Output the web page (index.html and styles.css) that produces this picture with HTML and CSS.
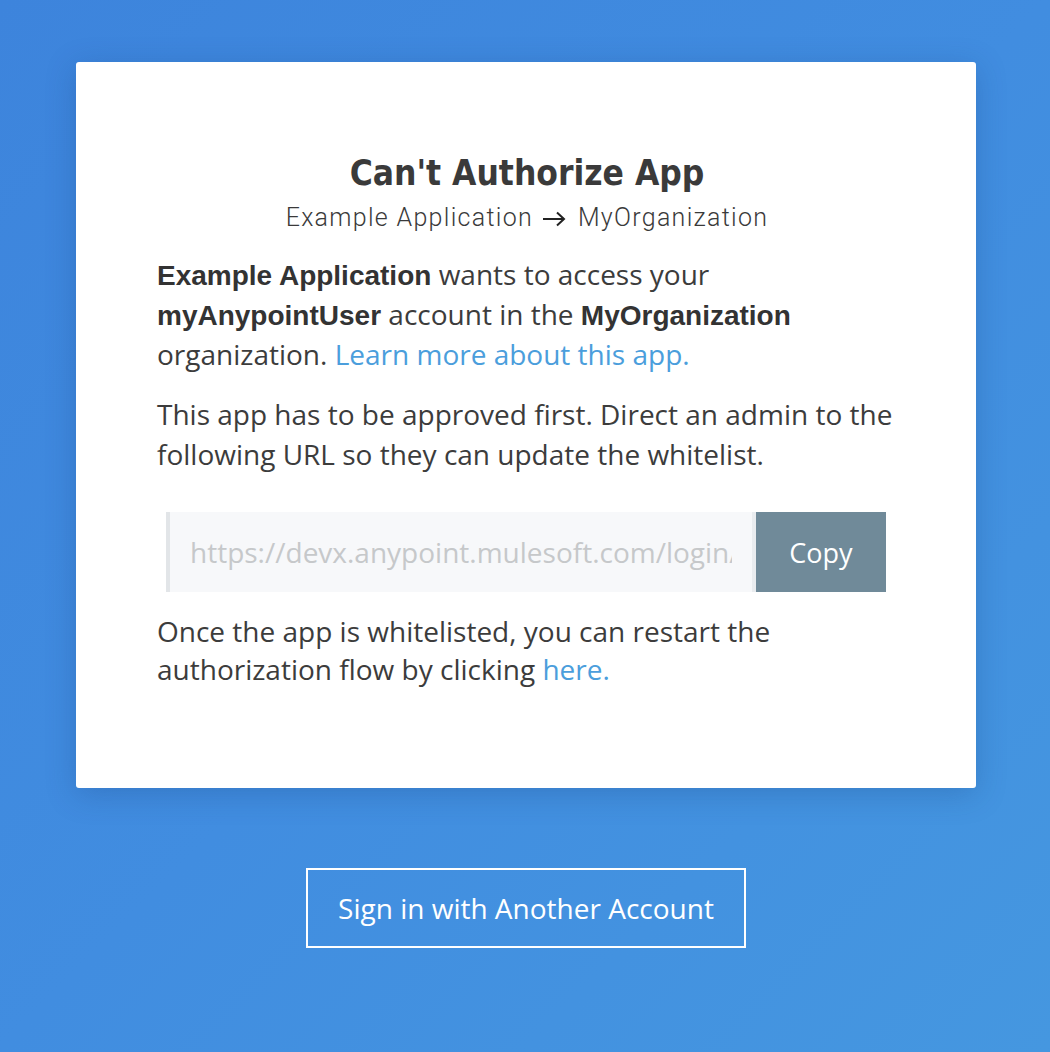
FILE: index.html
```html
<!DOCTYPE html>
<html>
<head>
<meta charset="utf-8">
<link rel="stylesheet" href="styles.css">
</head>
<body>
<main class="page">
  <section class="card">
    <h1 class="title">Can't Authorize App</h1>
    <p class="subtitle">Example Application <svg class="arrow" width="24" height="16" viewBox="0 0 24 16"><path d="M1 8H22M15 1.5L22 8L15 14.5" fill="none" stroke="#222" stroke-width="2"/></svg> MyOrganization</p>
    <p class="text first"><b>Example Application</b> wants to access your <b>myAnypointUser</b> account in the <b>MyOrganization</b> organization. <a class="link" href="#">Learn more about this app.</a></p>
    <p class="text">This app has to be approved first. Direct an admin to the following URL so they can update the whitelist.</p>
    <div class="copybox">
      <div class="url"><span class="url-text">https://devx.anypoint.mulesoft.com/login/authorize?client_id=example</span></div>
      <button class="copy">Copy</button>
    </div>
    <p class="text last">Once the app is whitelisted, you can restart the authorization flow by clicking <a class="link" href="#">here.</a></p>
  </section>
  <button class="signin">Sign in with Another Account</button>
</main>
</body>
</html>
```
FILE: styles.css
```css
html, body {
  margin: 0;
  padding: 0;
}
body {
  background: linear-gradient(135deg, #3d84dc 0%, #418de0 50%, #4597e0 100%);
  min-height: 1052px;
  font-family: "Open Sans", sans-serif;
}
.page {
  display: flex;
  flex-direction: column;
  align-items: center;
  padding-top: 62px;
  padding-left: 2px;
}
.card {
  width: 900px;
  box-sizing: border-box;
  height: 726px;
  background: #fff;
  border-radius: 3px;
  box-shadow: 0 6px 30px rgba(20, 60, 120, 0.25);
  padding: 88px 79px 0 81px;
}
.title {
  margin: 0;
  text-align: center;
  font-family: "DejaVu Sans Condensed", "Roboto", sans-serif;
  font-weight: bold;
  font-size: 35px;
  line-height: 46px;
  color: #3a3a3a;
}
.subtitle {
  margin: 0;
  text-align: center;
  font-family: "Roboto", sans-serif;
  font-weight: 300;
  font-size: 25px;
  line-height: 44px;
  letter-spacing: 1.3px;
  color: #3a3a3a;
}
.arrow {
  display: inline-block;
  vertical-align: -1px;
  margin: 0 4px 0 2px;
}
.text {
  margin: 0;
  font-size: 28px;
  line-height: 40px;
  color: #3c3c3c;
}
.text.first {
  margin-top: 14px;
}
.text + .text {
  margin-top: 20px;
}
.text b {
  font-family: "Liberation Sans", Arial, sans-serif;
  font-weight: bold;
  font-size: 28px;
  line-height: 30px;
  color: #333;
}
.link {
  color: #4b9edc;
  text-decoration: none;
}
.copybox {
  display: flex;
  width: 720px;
  height: 80px;
  margin: 38px 0 0 9px;
}
.url {
  flex: 1;
  min-width: 0;
  background: #f7f8fa;
  border-left: 4px solid #e2e5e8;
  border-right: 4px solid #e9ecef;
  padding: 0 20px;
  display: flex;
  align-items: center;
}
.url-text {
  display: block;
  overflow: hidden;
  white-space: nowrap;
  color: #c6c8ca;
  font-size: 28px;
  line-height: 80px;
}
.copy {
  width: 130px;
  border: none;
  background: #708a99;
  color: #fff;
  font-family: "Open Sans", sans-serif;
  font-size: 27px;
  padding: 0;
}
.text.last {
  margin-top: 20px;
  line-height: 38px;
}
.signin {
  margin-top: 80px;
  width: 440px;
  height: 80px;
  border: 2px solid #fff;
  background: transparent;
  color: #fff;
  font-family: "Open Sans", sans-serif;
  font-size: 28px;
  padding: 0;
}
```
